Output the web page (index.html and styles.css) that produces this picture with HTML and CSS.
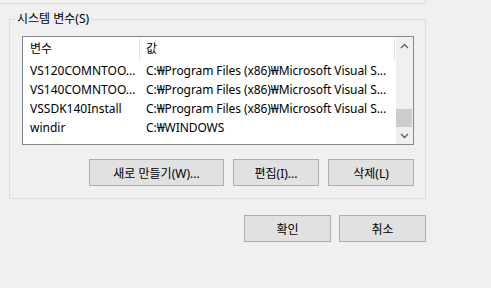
FILE: index.html
```html
<!DOCTYPE html>
<html lang="ko">
<head>
    <meta charset="UTF-8">
    <title>환경 변수</title>
    <link rel="stylesheet" href="styles.css">
</head>
<body>
    <div class="prev-group"></div>

    <fieldset class="group">
        <legend>시스템 변수(S)</legend>

        <div class="listbox">
            <div class="list">
                <div class="list-head">
                    <div class="cell name">변수</div>
                    <div class="cell value">값</div>
                </div>
                <div class="row">
                    <div class="cell name">VS120COMNTOO...</div>
                    <div class="cell value">C:₩Program Files (x86)₩Microsoft Visual S...</div>
                </div>
                <div class="row">
                    <div class="cell name">VS140COMNTOO...</div>
                    <div class="cell value">C:₩Program Files (x86)₩Microsoft Visual S...</div>
                </div>
                <div class="row">
                    <div class="cell name">VSSDK140Install</div>
                    <div class="cell value">C:₩Program Files (x86)₩Microsoft Visual S...</div>
                </div>
                <div class="row">
                    <div class="cell name">windir</div>
                    <div class="cell value">C:₩WINDOWS</div>
                </div>
            </div>
            <div class="scrollbar">
                <div class="arrow">
                    <svg width="9" height="6" viewBox="0 0 9 6"><polyline points="1,5 4.5,1.5 8,5" fill="none" stroke="#606060" stroke-width="1.4"/></svg>
                </div>
                <div class="track"><div class="thumb"></div></div>
                <div class="arrow">
                    <svg width="9" height="6" viewBox="0 0 9 6"><polyline points="1,1 4.5,4.5 8,1" fill="none" stroke="#606060" stroke-width="1.4"/></svg>
                </div>
            </div>
        </div>

        <div class="actions">
            <button class="btn wide">새로 만들기(W)...</button>
            <button class="btn">편집(I)...</button>
            <button class="btn">삭제(L)</button>
        </div>
    </fieldset>

    <div class="dialog-actions">
        <button class="btn ok">확인</button>
        <button class="btn ok">취소</button>
    </div>
</body>
</html>
```

FILE: styles.css
```css
* {
    box-sizing: border-box;
}

body {
    margin: 0;
    background: #f0f0f0;
    font-family: "Noto Sans", "Noto Sans CJK KR", sans-serif;
    font-size: 12px;
    color: #000;
}

.prev-group {
    width: 426px;
    height: 4px;
    border-right: 1px solid #dcdcdc;
    border-bottom: 1px solid #dcdcdc;
}

.group {
    width: 417px;
    margin: 7px 0 0 9px;
    padding: 9px 11px 12px 12px;
    border: 1px solid #dcdcdc;
    min-width: 0;
}

.group legend {
    margin-left: -7px;
    padding: 0 2px;
    line-height: 16px;
}

.listbox {
    display: flex;
    width: 392px;
    height: 109px;
    border: 1px solid #828790;
    background: #fff;
}

.list {
    flex: 1;
    min-width: 0;
}

.list-head,
.row {
    display: grid;
    grid-template-columns: 117px 255px;
}

.list-head .cell {
    height: 24px;
    line-height: 24px;
    border-right: 1px solid #e5e5e5;
}

.row .cell {
    height: 19px;
    line-height: 19px;
}

.cell {
    white-space: nowrap;
    overflow: hidden;
}

.cell.name {
    padding-left: 7px;
}

.cell.value {
    padding-left: 6px;
}

.row .cell.value {
    letter-spacing: -0.08px;
}

.scrollbar {
    width: 17px;
    display: flex;
    flex-direction: column;
    background: #f0f0f0;
}

.arrow {
    height: 17px;
    display: flex;
    align-items: center;
    justify-content: center;
}

.track {
    flex: 1;
    display: flex;
    flex-direction: column;
    justify-content: flex-end;
}

.thumb {
    height: 18px;
    margin: 0 1px 0 0;
    background: #cdcdcd;
}

.actions {
    display: flex;
    justify-content: flex-end;
    gap: 9px;
    margin-top: 14px;
}

.btn {
    width: 86px;
    height: 27px;
    padding: 0;
    border: 1px solid #adadad;
    background: #e1e1e1;
    font-family: inherit;
    font-size: 12px;
    color: #000;
}

.btn.wide {
    width: 135px;
}

.dialog-actions {
    display: flex;
    justify-content: flex-end;
    gap: 8px;
    width: 417px;
    margin: 16px 0 0 9px;
}

.btn.ok {
    width: 87px;
}
```
